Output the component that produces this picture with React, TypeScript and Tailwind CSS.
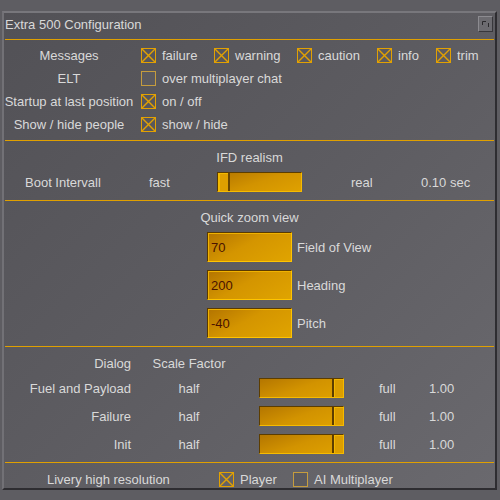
import type { ReactNode } from "react";

// checkbox in the amber dialog theme; ticked boxes carry an X
function Box({ on }: { on?: boolean }) {
  if (!on) return <span className="block h-[15px] w-[15px] shrink-0 border border-[#c59c3e] bg-[#5b5a5f]" />;
  return (
    <span className="block h-[15px] w-[15px] shrink-0 border border-[#e2a102]">
      <svg width="13" height="13" viewBox="0 0 13 13" className="block">
        <path d="M0 0L13 13M13 0L0 13" stroke="#e2a102" strokeWidth="1.4" />
      </svg>
    </span>
  );
}

function Check({ on, w, children }: { on?: boolean; w?: string; children: ReactNode }) {
  return (
    <div className={`flex items-center gap-[6px] whitespace-nowrap ${w ?? ""}`}>
      <Box on={on} />
      <span>{children}</span>
    </div>
  );
}

function Slider({ knob }: { knob: "left" | "right" }) {
  const right = knob === "right";
  return (
    <div
      className={`flex h-[20px] w-[85px] shrink-0 border border-t-[#5c3d00] border-l-[#5c3d00] border-b-[#f6bb00] border-r-[#f6bb00] bg-[linear-gradient(160deg,#b47600,#d29300_50%,#dfa100)] ${right ? "justify-end" : "justify-start"}`}
    >
      {right ? (
        <div className="h-full w-[11px] border-l-2 border-l-[#5c3d00] bg-[#dc9e00] shadow-[inset_1px_1px_0_#f2b600]" />
      ) : (
        <div className="h-full w-[12px] border-r-2 border-r-[#6a4700] bg-[#dfa000] shadow-[inset_2px_1px_0_#f4ba00]" />
      )}
    </div>
  );
}

function Field({ value }: { value: string }) {
  return (
    <div className="flex h-[30px] w-[85px] shrink-0 items-center border border-t-[#5a3a00] border-l-[#5a3a00] border-b-[#ffc400] border-r-[#ffc400] bg-[linear-gradient(150deg,#b37400,#d49500_45%,#e0a400)] pl-[3px] text-[#4a1300] shadow-[inset_1px_1px_0_#f0b200]">
      {value}
    </div>
  );
}

function Rule() {
  return <div className="mx-[1px] h-px bg-[#e0a000]" />;
}

function OptRow({ label, children }: { label: string; children: ReactNode }) {
  return (
    <div className="flex h-[23px] items-center whitespace-nowrap">
      <div className="flex w-[130px] justify-center">{label}</div>
      <div className="ml-[7px] flex items-center">{children}</div>
    </div>
  );
}

const scaleRows = ["Fuel and Payload", "Failure", "Init"];

export default function App() {
  return (
    <div className="h-[500px] w-[500px] overflow-hidden bg-[#5e5d62] pt-[11px] pl-[2px] font-['Liberation_Sans',Arial,sans-serif] text-[13px] leading-none text-[#d9d9d9]">
      <div className="h-[479px] w-[495px] border-2 border-t-[#78777c] border-l-[#727176] border-b-[#2e2d31] border-r-[#2e2d31] bg-[linear-gradient(135deg,#525156,#5d5c61_50%,#6a696e)]">
        {/* title bar */}
        <div className="flex h-[22px] items-center justify-between pl-[1px] pr-[2px]">
          <span>Extra 500 Configuration</span>
          <div className="h-[16px] w-[15px] border border-t-[#8c8b90] border-l-[#8c8b90] border-b-[#38373b] border-r-[#38373b] bg-[#6c6b70]">
            <svg width="13" height="14" viewBox="0 0 13 14" className="block">
              <path d="M3.5 8V4.5H7" stroke="#2a292c" strokeWidth="1" fill="none" />
              <path d="M9.5 6V10" stroke="#2a292c" strokeWidth="1" />
            </svg>
          </div>
        </div>
        <div className="h-[4px]" />
        <Rule />

        {/* options */}
        <div className="pt-[4px] pb-[4px]">
          <OptRow label="Messages">
            <Check on w="w-[73px]">failure</Check>
            <Check on w="w-[83px]">warning</Check>
            <Check on w="w-[80px]">caution</Check>
            <Check on w="w-[59px]">info</Check>
            <Check on>trim</Check>
          </OptRow>
          <OptRow label="ELT">
            <Check>over multiplayer chat</Check>
          </OptRow>
          <OptRow label="Startup at last position">
            <Check on>on / off</Check>
          </OptRow>
          <OptRow label="Show / hide people">
            <Check on>show / hide</Check>
          </OptRow>
        </div>
        <Rule />

        {/* IFD realism */}
        <div className="pt-[6px] pb-[8px]">
          <div className="flex h-[20px] items-center justify-center">IFD realism</div>
          <div className="mt-[5px] flex h-[20px] items-center pl-[21px]">
            <span className="w-[124px]">Boot Intervall</span>
            <span className="w-[68px]">fast</span>
            <Slider knob="left" />
            <span className="ml-[49px] w-[70px]">real</span>
            <span>0.10 sec</span>
          </div>
        </div>
        <Rule />

        {/* quick zoom */}
        <div className="pt-[6px] pb-[8px]">
          <div className="flex h-[20px] items-center justify-center">Quick zoom view</div>
          <div className="mt-[5px] flex flex-col gap-[8px] pl-[203px]">
            {[
              ["70", "Field of View"],
              ["200", "Heading"],
              ["-40", "Pitch"],
            ].map(([v, l]) => (
              <div key={l} className="flex items-center gap-[5px]">
                <Field value={v} />
                <span>{l}</span>
              </div>
            ))}
          </div>
        </div>
        <Rule />

        {/* dialog scale */}
        <div className="pt-[6px] pb-[8px]">
          <div className="flex h-[20px] items-center">
            <div className="w-[127px] text-right">Dialog</div>
            <div className="ml-[14px] w-[88px] text-center">Scale Factor</div>
          </div>
          <div className="mt-[5px] flex flex-col gap-[8px]">
            {scaleRows.map((r) => (
              <div key={r} className="flex h-[20px] items-center">
                <div className="w-[127px] text-right">{r}</div>
                <div className="ml-[14px] w-[88px] text-center">half</div>
                <div className="ml-[26px]">
                  <Slider knob="right" />
                </div>
                <span className="ml-[35px] w-[50px]">full</span>
                <span>1.00</span>
              </div>
            ))}
          </div>
        </div>
        <Rule />

        {/* livery */}
        <div className="mt-[8px] flex h-[16px] items-center whitespace-nowrap pl-[43px]">
          <span className="w-[172px]">Livery high resolution</span>
          <Check on w="w-[74px]">Player</Check>
          <Check>AI Multiplayer</Check>
        </div>
      </div>
    </div>
  );
}
